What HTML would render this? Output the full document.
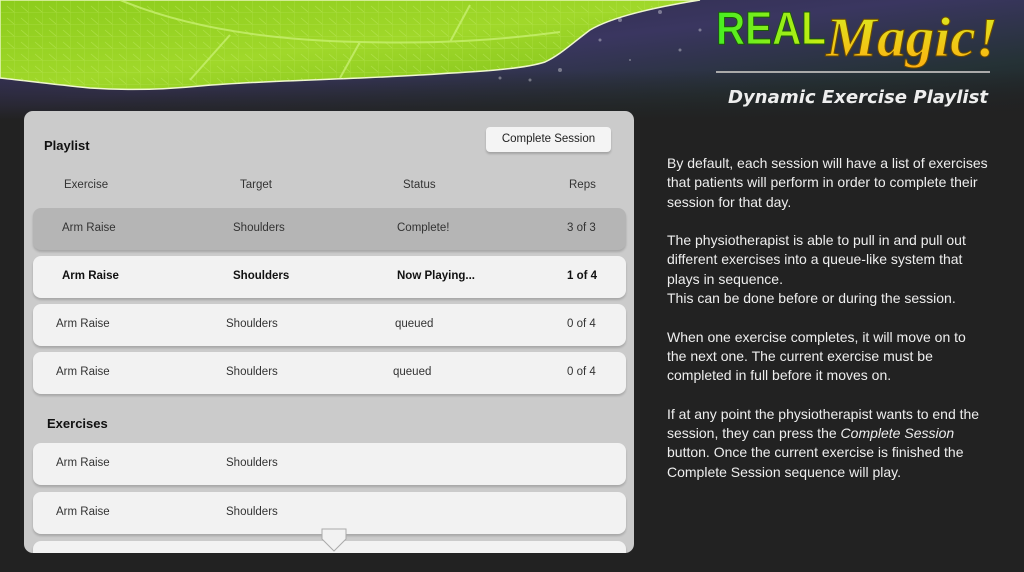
<!DOCTYPE html>
<html><head><meta charset="utf-8"><style>
*{margin:0;padding:0;box-sizing:border-box}
body{width:1024px;height:572px;overflow:hidden;background:#222222;font-family:"Liberation Sans",sans-serif;position:relative}
.hdr{position:absolute;left:0;top:0;width:1024px;height:120px}
.panel{position:absolute;left:24px;top:111px;width:610px;height:442px;background:#cbcbcb;border-radius:9px;overflow:hidden;font-family:"Liberation Sans",sans-serif;color:#222}
.t{position:absolute;font-size:11.5px;color:#333}
.row{position:absolute;left:9px;width:593px;height:42px;background:#f2f2f2;border-radius:8px;box-shadow:0 2px 2px rgba(0,0,0,.18)}
.row span{position:absolute;top:14px;font-size:11.5px;color:#333}
.b span{font-weight:bold;color:#111}
.h{position:absolute;font-weight:bold;font-size:13px;color:#111}
.btn{position:absolute;left:462px;top:16px;width:125px;height:25px;background:#f4f4f4;border-radius:4px;box-shadow:0 2px 2px rgba(0,0,0,.2);font-size:11.5px;text-align:center;line-height:25px;color:#222}
.txt{position:absolute;left:667px;top:154px;width:350px;color:#eeeeee;font-size:14px;line-height:19.3px;white-space:nowrap}
.txt p{margin-bottom:19.3px}
</style></head><body>
<svg class="hdr" viewBox="0 0 1024 120">
<defs>
<linearGradient id="sky" x1="0" y1="0" x2="1" y2="1"><stop offset="0" stop-color="#2a2840"/><stop offset=".45" stop-color="#3a3660"/><stop offset=".75" stop-color="#253236"/><stop offset="1" stop-color="#1e1e20"/></linearGradient>
<linearGradient id="leaf" x1="0" y1="0" x2="1" y2="1"><stop offset="0" stop-color="#8ccc1c"/><stop offset=".5" stop-color="#a0d82a"/><stop offset="1" stop-color="#7fc018"/></linearGradient>
<linearGradient id="rm" x1="0" y1="0" x2="1" y2="0"><stop offset="0" stop-color="#44ee22"/><stop offset="1" stop-color="#ccee11"/></linearGradient>
<linearGradient id="mg" x1="0" y1="0" x2="0" y2="1"><stop offset="0" stop-color="#d8ee20"/><stop offset="1" stop-color="#ffb010"/></linearGradient>
<linearGradient id="fade" x1="0" y1="0" x2="0" y2="1"><stop offset="0" stop-color="#222" stop-opacity="0"/><stop offset="1" stop-color="#222"/></linearGradient>
<pattern id="vein" width="14" height="12" patternUnits="userSpaceOnUse"><path d="M0 0 H14 M0 0 V12 M7 6 L14 12" stroke="#c8f070" stroke-width=".7" fill="none" opacity=".45"/></pattern>
</defs>
<rect width="1024" height="120" fill="url(#sky)"/>
<rect y="70" width="1024" height="50" fill="url(#fade)"/>
<g fill="#fff" opacity=".35"><circle cx="620" cy="20" r="2"/><circle cx="600" cy="40" r="1.5"/><circle cx="560" cy="70" r="2"/><circle cx="530" cy="80" r="1.5"/><circle cx="660" cy="12" r="2"/><circle cx="680" cy="50" r="1.5"/><circle cx="630" cy="60" r="1"/><circle cx="500" cy="78" r="1.5"/><circle cx="700" cy="30" r="1.5"/></g>
<path d="M0 0 H700 C650 8 610 18 590 30 C570 45 560 55 545 62 C520 70 470 72 420 75 C340 80 270 80 200 86 C160 90 120 90 90 88 C50 84 20 80 0 78 Z" fill="url(#leaf)" stroke="#f0f8d0" stroke-width="1.5"/>
<path d="M0 0 H700 C650 8 610 18 590 30 C570 45 560 55 545 62 C520 70 470 72 420 75 C340 80 270 80 200 86 C160 90 120 90 90 88 C50 84 20 80 0 78 Z" fill="url(#vein)"/>
<g stroke="#c8f070" stroke-width="2" fill="none" opacity=".8"><path d="M120 0 C180 25 260 40 360 42 C440 44 500 40 560 32"/><path d="M230 35 L190 80"/><path d="M360 42 L340 78"/><path d="M450 42 L470 5"/></g>
<text x="716" y="44" font-family="Liberation Sans" font-weight="bold" font-size="46" fill="url(#rm)" stroke="#1a5a08" stroke-width="1" textLength="110" lengthAdjust="spacingAndGlyphs">REAL</text>
<text x="826" y="56" font-family="Liberation Serif" font-style="italic" font-weight="bold" font-size="56" fill="url(#mg)" stroke="#6a4a00" stroke-width="1" textLength="172" lengthAdjust="spacingAndGlyphs">Magic!</text>
<rect x="716" y="71" width="274" height="2" fill="#aaa"/>
<text x="728" y="103" font-family="DejaVu Sans" font-style="italic" font-weight="bold" font-size="18" fill="#eee" textLength="260" lengthAdjust="spacingAndGlyphs">Dynamic Exercise Playlist</text>
</svg>
<div class="panel">
<div class="h" style="left:20px;top:27px">Playlist</div>
<div class="btn">Complete Session</div>
<div class="t" style="left:40px;top:68px">Exercise</div>
<div class="t" style="left:216px;top:68px">Target</div>
<div class="t" style="left:379px;top:68px">Status</div>
<div class="t" style="left:545px;top:68px">Reps</div>
<div class="row" style="top:97px;background:#b5b5b5"><span style="left:29px">Arm Raise</span><span style="left:200px">Shoulders</span><span style="left:364px">Complete!</span><span style="left:534px">3 of 3</span></div>
<div class="row b" style="top:145px"><span style="left:29px">Arm Raise</span><span style="left:200px">Shoulders</span><span style="left:364px">Now Playing...</span><span style="left:534px">1 of 4</span></div>
<div class="row" style="top:193px"><span style="left:23px">Arm Raise</span><span style="left:193px">Shoulders</span><span style="left:362px">queued</span><span style="left:534px">0 of 4</span></div>
<div class="row" style="top:241px"><span style="left:23px">Arm Raise</span><span style="left:193px">Shoulders</span><span style="left:360px">queued</span><span style="left:534px">0 of 4</span></div>
<div class="h" style="left:23px;top:305px">Exercises</div>
<div class="row" style="top:332px"><span style="left:23px">Arm Raise</span><span style="left:193px">Shoulders</span></div>
<div class="row" style="top:381px"><span style="left:23px">Arm Raise</span><span style="left:193px">Shoulders</span></div>
<div class="row" style="top:430px"></div>
<svg style="position:absolute;left:296px;top:416px" width="30" height="26" viewBox="0 0 30 26"><path d="M2 2 H26 V12 L14 24 L2 12 Z" fill="#f2f2f2" stroke="#aaa" stroke-width="1"/></svg>
</div>
<div class="txt">
<p>By default, each session will have a list of exercises<br>that patients will perform in order to complete their<br>session for that day.</p>
<p>The physiotherapist is able to pull in and pull out<br>different exercises into a queue-like system that<br>plays in sequence.<br>This can be done before or during the session.</p>
<p>When one exercise completes, it will move on to<br>the next one. The current exercise must be<br>completed in full before it moves on.</p>
<p>If at any point the physiotherapist wants to end the<br>session, they can press the <i>Complete Session</i><br>button. Once the current exercise is finished the<br>Complete Session sequence will play.</p>
</div>
</body></html>
